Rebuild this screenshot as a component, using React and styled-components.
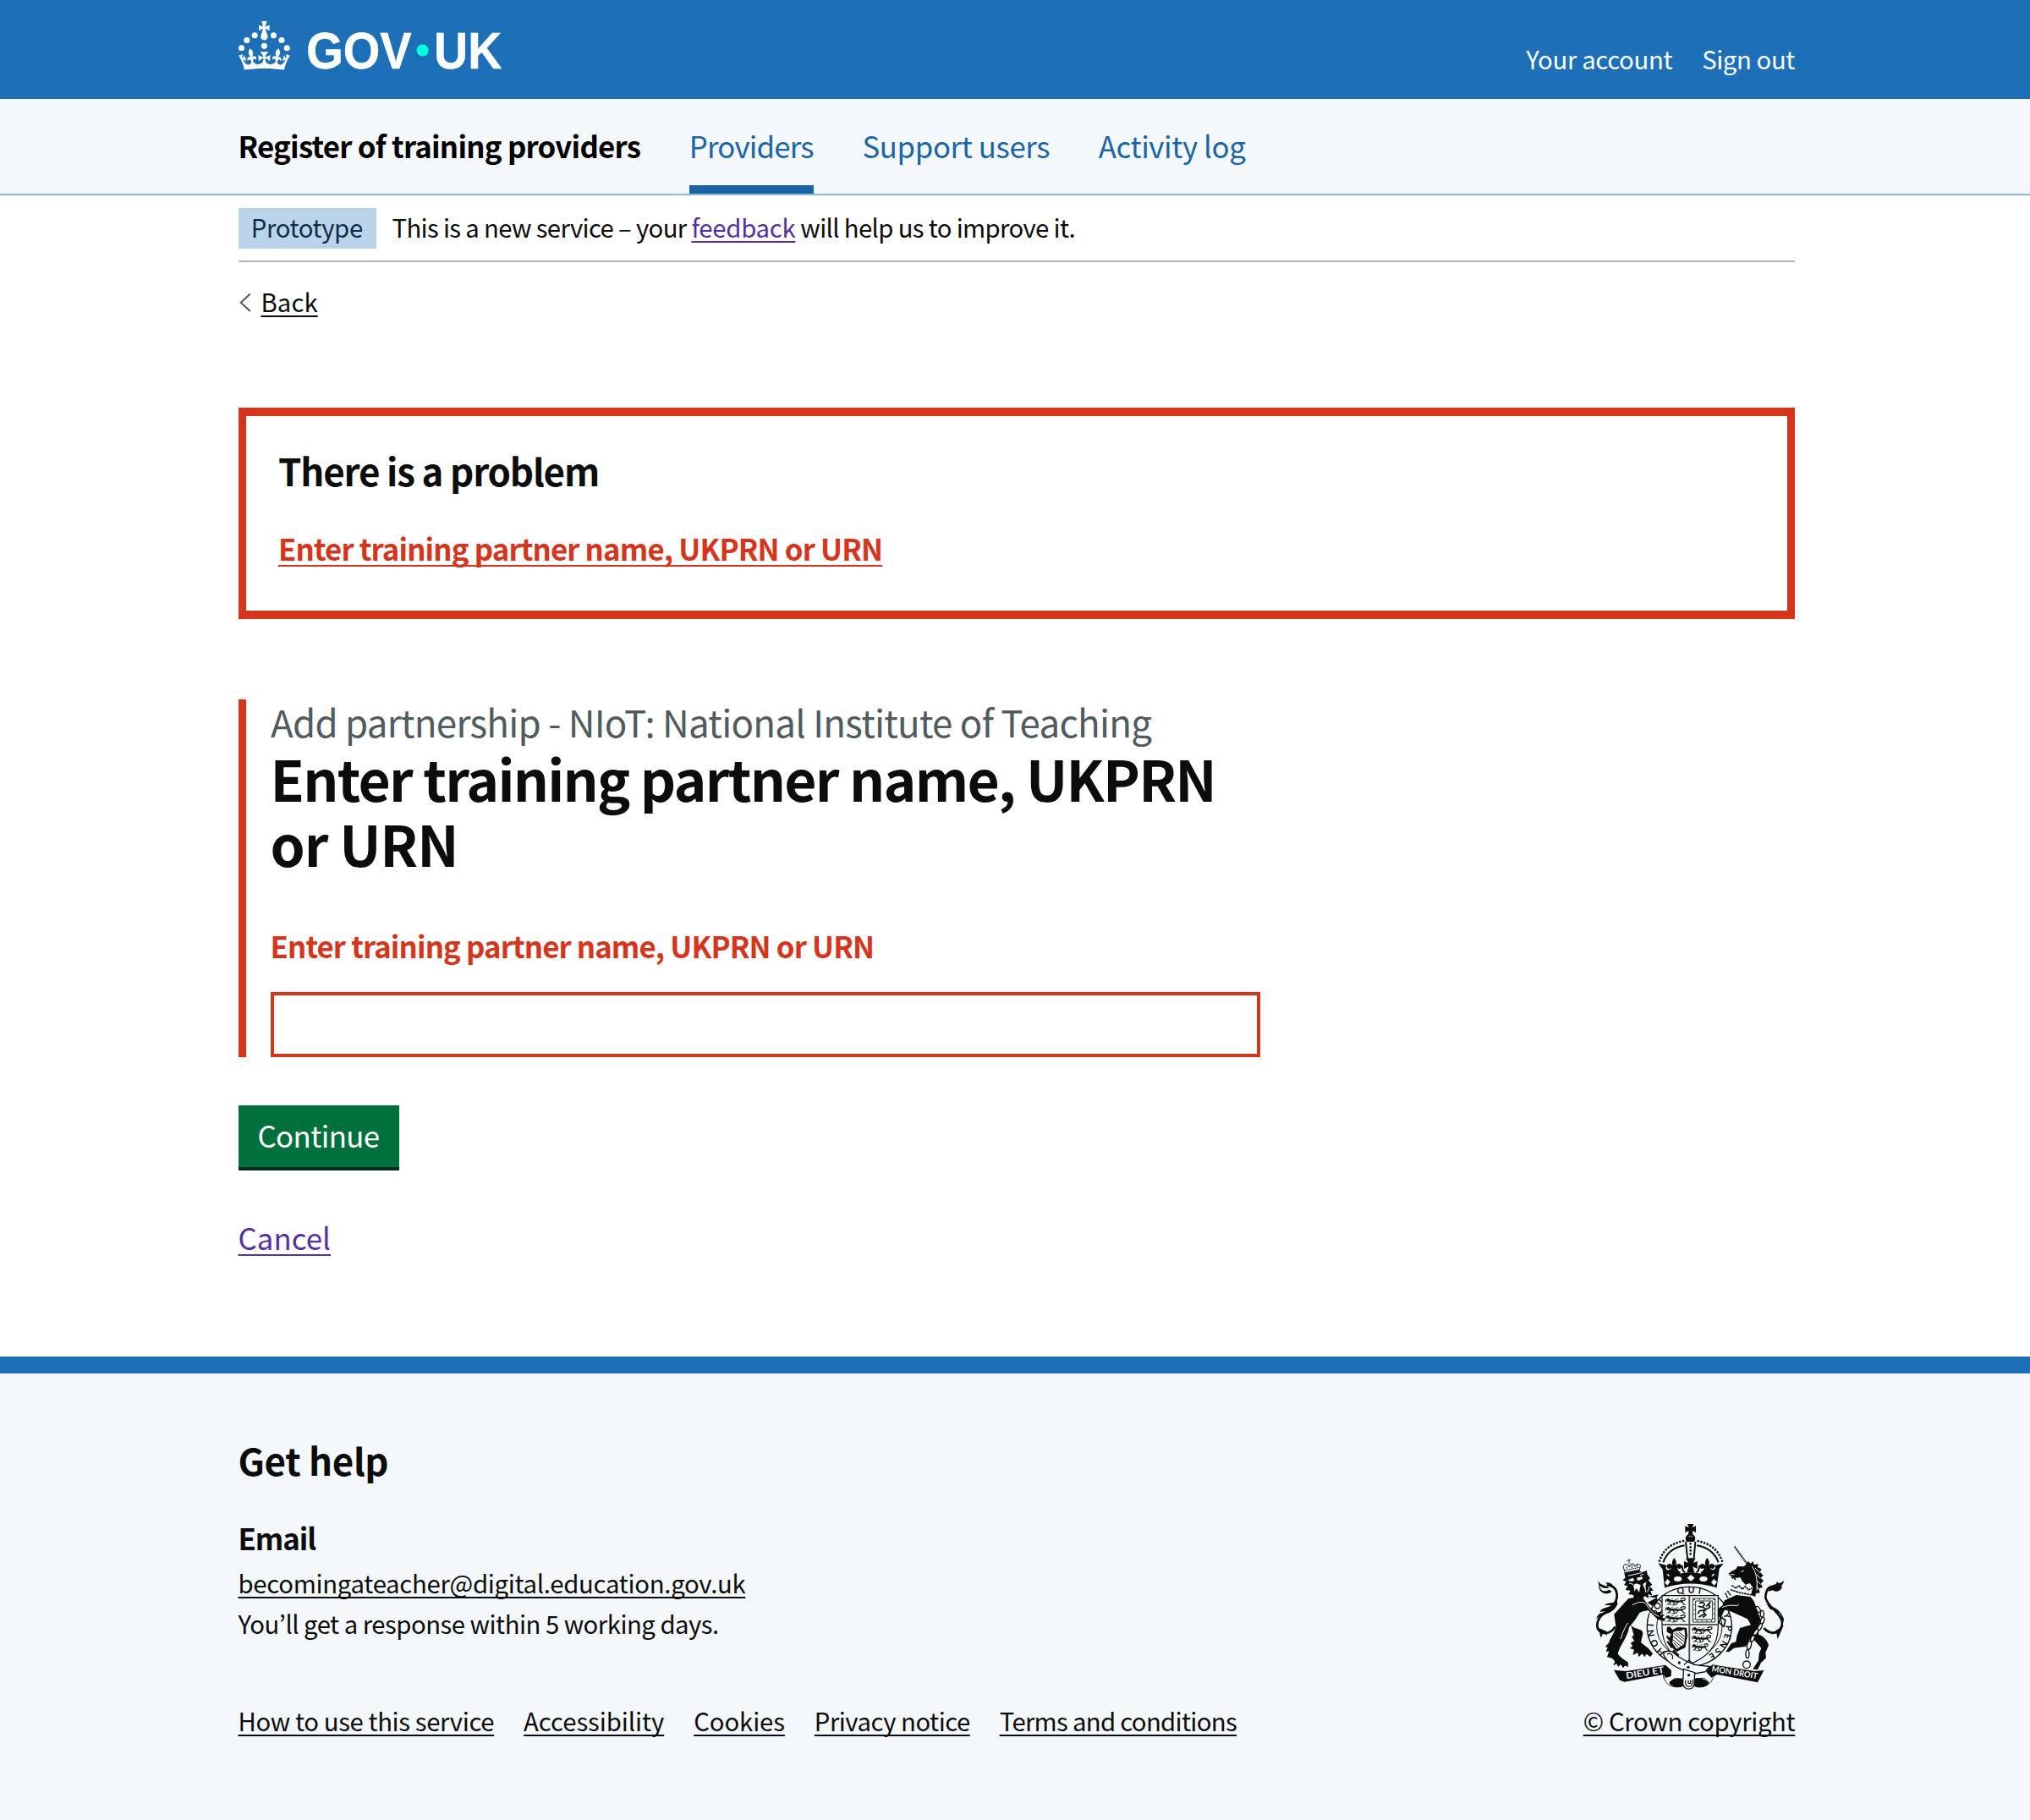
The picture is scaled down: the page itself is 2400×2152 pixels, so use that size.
import React from "react";
import styled, { createGlobalStyle } from "styled-components";

const GlobalStyle = createGlobalStyle`
  *, *::before, *::after { box-sizing: border-box; }
  body {
    margin: 0;
    background: #fff;
    color: #0b0c0c;
    font-family: "Noto Sans CJK KR", "Noto Sans", sans-serif;
    -webkit-font-smoothing: antialiased;
  }
  h1, h2, h3, p, ul { margin: 0; padding: 0; font-weight: inherit; font-size: inherit; list-style: none; }
`;

const sizes = { s: [29.3, 38], m: [34.8, 48], l: [43.9, 58], xl: [65.9, 76.7] };

const Text = styled.span`
  display: ${(p) => (p.$inline ? "inline" : "block")};
  font-size: ${(p) => sizes[p.$size || "s"][0]}px;
  line-height: ${(p) => p.$line || sizes[p.$size || "s"][1]}px;
  font-weight: ${(p) => (p.$bold ? 700 : 400)};
  letter-spacing: ${(p) => p.$track || 0}px;
  color: ${(p) => p.$color || "inherit"};
  white-space: pre;
`;

const Link = styled(Text).attrs({ as: "a", href: "#" })`
  text-decoration: ${(p) => (p.$plain ? "none" : "underline")};
  text-decoration-thickness: 2px;
  text-decoration-skip-ink: none;
  text-underline-offset: ${(p) => p.$offset || 4}px;
`;

const Container = styled.div`
  width: 1840.5px;
  margin-left: 281.5px;
`;

const Header = styled.header`
  height: 117px;
  background: #1d70b8;
  color: #fff;
`;
const HeaderRow = styled(Container)`
  display: flex;
  justify-content: space-between;
  align-items: flex-start;
`;
const Logo = styled.svg`
  display: block;
  width: 310.6px;
  height: 58px;
  margin-top: 25px;
  overflow: visible;
`;
const HeaderLinks = styled.nav`
  display: flex;
  gap: 35px;
  padding-top: 50px;
`;

const ServiceNav = styled.div`
  height: 114px;
  background: #f4f8fb;
  border-bottom: 2px solid #8eb8dc;
`;
const ServiceRow = styled(Container)`
  display: flex;
  height: 112px;
  gap: 57.7px;
`;
const ServiceItem = styled.div`
  padding-top: 31px;
  border-bottom: ${(p) => (p.$active ? "10px solid #1a65a6" : "0")};
`;

const PhaseBanner = styled.div`
  display: flex;
  align-items: flex-start;
  gap: 19px;
  height: 79px;
  padding-top: 15px;
  border-bottom: 2px solid #b0b6b6;
`;
const Tag = styled.div`
  width: 163px;
  height: 48px;
  padding-left: 15.3px;
  background: #bbd4ea;
`;
const BackRow = styled.div`
  display: flex;
  align-items: center;
  margin-top: 27px;
`;
const Chevron = styled.svg`
  width: 27px;
  height: 38px;
`;

const ErrorSummary = styled.section`
  height: 250px;
  margin-top: 107px;
  padding: 34.5px 38.5px;
  border: 9.6px solid #d4351c;
  border-width: 10px 9px;
`;
const ErrorLinkRow = styled.div`
  margin-top: 39px;
`;
const FormGroup = styled.div`
  width: 1208.5px;
  height: 423px;
  margin-top: 95px;
  padding-left: 29px;
  border-left: 9px solid #d4351c;
`;
const Caption = styled(Text)`
  line-height: 53px;
  padding-left: 0.5px;
  margin-bottom: 2px;
`;
const ErrorMessage = styled(Text)`
  margin: 59px 0 31px;
`;
const Input = styled.input`
  display: block;
  width: 1170px;
  height: 77px;
  padding: 8px;
  border: 4px solid #d4351c;
  border-radius: 0;
  outline: 0;
  font: inherit;
  font-size: 34.8px;
`;
const Button = styled.button`
  display: block;
  width: 190px;
  height: 73px;
  margin: 57px 0 59px;
  padding: 0 0 1.6px;
  border: 0;
  background: #00703c;
  box-shadow: 0 4px 0 #002d18;
  color: #fff;
  font-family: inherit;
  text-align: center;
`;
const ButtonLabel = styled(Text)`
  line-height: 71.4px;
`;

const Footer = styled.footer`
  height: 548px;
  margin-top: 117px;
  padding-top: 73px;
  border-top: 20px solid #1d70b8;
  background: #f4f8fb;
`;
const FooterRow = styled(Container)`
  display: flex;
  justify-content: space-between;
  align-items: flex-end;
`;
const EmailHeading = styled(Text)`
  margin: 38.5px 0 5.5px;
`;
const FooterLinks = styled.ul`
  display: flex;
  gap: 35px;
  margin-top: 72px;
`;
const CrestBlock = styled.div`
  width: 250.3px;
`;
const CrestSvg = styled.svg`
  display: block;
  width: 226.67px;
  height: 200px;
  margin: 0 0 15.2px 13.3px;
`;

const GovLogo = () => (
  <Logo viewBox="0 0 324 60.5" fill="#fff" preserveAspectRatio="xMinYMin meet">
    <circle cx="20" cy="17.6" r="3.7" />
    <circle cx="10.2" cy="23.5" r="3.7" />
    <circle cx="3.7" cy="33.2" r="3.7" />
    <circle cx="31.7" cy="30.6" r="3.7" />
    <circle cx="43.3" cy="17.6" r="3.7" />
    <circle cx="53.2" cy="23.5" r="3.7" />
    <circle cx="59.7" cy="33.2" r="3.7" />
    <path d="M33.1,9.8c.2-.1.3-.3.5-.5l4.6,2.4v-6.8l-4.6,1.5c-.1-.2-.3-.3-.5-.5l1.9-5.9h-6.7l1.9,5.9c-.2.1-.3.3-.5.5l-4.6-1.5v6.8l4.6-2.4c.1.2.3.3.5.5l-2.6,8c-.9,2.8,1.2,5.7,4.1,5.7h0c3,0,5.1-2.9,4.1-5.7l-2.6-8ZM37,37.9s-3.4,3.8-4.1,6.1c2.2,0,4.2-.5,6.4-2.8l-.7,8.5c-2-2.8-4.4-4.1-5.7-3.8.1,3.1.5,6.7,5.8,7.2,3.7.3,6.7-1.5,7-3.8.4-2.6-2-4.3-3.7-1.6-1.4-4.5,2.4-6.1,4.9-3.2-1.9-4.5-1.8-7.7,2.4-10.9,3,4,2.6,7.3-1.2,11.1,2.4-1.3,6.2,0,4,4.6-1.2-2.8-3.7-2.2-4.2.2-.3,1.7.7,3.7,3,4.2,1.9.3,4.7-.9,7-5.9-1.3,0-2.4.7-3.9,1.7l2.4-8c.6,2.3,1.4,3.7,2.2,4.5.6-1.6.5-2.8,0-5.3l5,1.8c-2.6,3.6-5.2,8.7-7.3,17.5-7.4-1.1-15.7-1.7-24.5-1.7h0c-8.8,0-17.1.6-24.5,1.7-2.1-8.9-4.7-13.9-7.3-17.5l5-1.8c-.5,2.5-.6,3.7,0,5.3.8-.8,1.6-2.3,2.2-4.5l2.4,8c-1.5-1-2.6-1.7-3.9-1.7,2.3,5,5.2,6.2,7,5.9,2.3-.4,3.3-2.4,3-4.2-.5-2.4-3-3.1-4.2-.2-2.2-4.6,1.6-6,4-4.6-3.7-3.7-4.2-7.1-1.2-11.1,4.2,3.2,4.3,6.4,2.4,10.9,2.5-2.8,6.3-1.3,4.9,3.2-1.8-2.7-4.1-1-3.7,1.6.3,2.3,3.3,4.1,7,3.8,5.4-.5,5.7-4.2,5.8-7.2-1.3-.2-3.7,1-5.7,3.8l-.7-8.5c2.2,2.3,4.2,2.7,6.4,2.8-.7-2.3-4.1-6.1-4.1-6.1h10.6,0Z" />
    <g fontFamily="Liberation Sans, sans-serif" fontWeight="700" fontSize="64" stroke="#fff" strokeWidth="0.5">
      <text x="83.6" y="58.1" textLength="130" lengthAdjust="spacingAndGlyphs">GOV</text>
      <text x="241" y="58.1" textLength="83.8" lengthAdjust="spacingAndGlyphs">UK</text>
    </g>
    <circle cx="227" cy="36" r="7.4" fill="#00ffe0" />
  </Logo>
);

const Fleur = ({ x, y, s = 1 }) => (
  <path
    transform={`translate(${x} ${y}) scale(${s})`}
    d="M0-26C-8-16-9-8-5 2C-10-8-24-8-25 3C-25 12-15 14-12 7C-10 14-14 20-22 22L-16 36H16L22 22C14 20 10 14 12 7C15 14 25 12 25 3C24-8 10-8 5 2C9-8 8-16 0-26Z"
  />
);

const Passant = ({ x, y, w = 1 }) => (
  <g transform={`translate(${x} ${y}) scale(${w} 1)`} fill="none" stroke="#0b0c0c" strokeLinecap="round">
    <circle cx="8" cy="7" r="5" fill="#0b0c0c" strokeWidth="2" />
    <path strokeWidth="7" d="M14 11C26 8 38 15 56 10" />
    <path strokeWidth="3.5" d="M17 13L9 22M25 14L32 23L24 25M42 14L37 23M54 12L64 22M59 10C70 9 71-1 62 0L52 3M1 4L-1 13" />
    <path strokeWidth="2" d="M18 5L24 2M32 6L42 3M7 19L3 24M62 22L69 24M14 23H20" />
  </g>
);

const Crest = () => (
  <CrestSvg viewBox="75 60 680 600" fill="#0b0c0c">
    {/* garter and its motto */}
    <ellipse cx="412" cy="430" rx="150" ry="141" fill="#f4f8fb" stroke="#0b0c0c" strokeWidth="4" />
    <g fill="none">
      <path id="garter-left" d="M327 520A124 117 0 0 1 288 408" />
      <path id="garter-upper" d="M293 390A124 117 0 0 1 345 330" />
      <path id="garter-top" d="M364 318Q412 303 464 318" />
      <path id="garter-right" d="M531 385A124 117 0 0 1 463 538" />
    </g>
    <g fontFamily="Lato, sans-serif" fontWeight="700" fontSize="32">
      <text><textPath href="#garter-left" textLength="112">HONI</textPath></text>
      <text><textPath href="#garter-upper" textLength="74">SOIT</textPath></text>
      <text><textPath href="#garter-top" textLength="82" startOffset="6">QUI</textPath></text>
      <text><textPath href="#garter-right" textLength="170">Y PENSE</textPath></text>
    </g>
    <ellipse cx="412" cy="430" rx="116" ry="110" fill="#f4f8fb" stroke="#0b0c0c" strokeWidth="3" />

    {/* shield */}
    <path d="M315 320H514V430C514 505 470 540 412 564C350 540 315 500 315 430Z" fill="#f4f8fb" stroke="#0b0c0c" strokeWidth="3.5" />
    <path d="M412 320V560M315 423H514" stroke="#0b0c0c" strokeWidth="5" />
    <path d="M412 320V560M315 423H514" stroke="#bfc3c6" strokeWidth="1.3" />
    <Passant x={329} y={329} />
    <Passant x={329} y={359} />
    <Passant x={329} y={389} />
    <Passant x={424} y={431} />
    <Passant x={423} y={461} w={0.95} />
    <Passant x={423} y={491} w={0.8} />
    <path d="M424 330H503V414H424ZM434 339H494V405H434Z" fill="none" stroke="#0b0c0c" strokeWidth="2.6" />
    <path d="M429 334H499V410H429Z" fill="none" stroke="#0b0c0c" strokeWidth="4" strokeDasharray="3 14" />
    <path d="M449 346L459 343L466 352L459 361L471 368L462 378L471 389L461 396M459 361L445 358M464 372L448 374L443 383M463 386L447 395M472 368L485 361L480 349L486 344M473 357L479 351" fill="none" stroke="#0b0c0c" strokeWidth="5" strokeLinejoin="round" strokeLinecap="round" />
    <path d="M332 432L343 430L352 441L370 432L402 434L405 463L397 505L366 519L345 498L340 472L347 457L332 449Z" />
    <path d="M355 451C366 440 376 452 394 439L397 463L393 493L367 509L352 489Z" fill="#f4f8fb" />
    <path d="M358 455L393 484M354 464L390 494M353 476L382 500M356 488L373 503M364 451L395 475M375 450L396 466" stroke="#0b0c0c" strokeWidth="3" />
    <path d="M332 464L345 480M334 482L350 505M354 514L374 533" stroke="#0b0c0c" strokeWidth="7" />

    {/* imperial crown */}
    <path d="M405 66H427L422 79L435 73V96L422 90L425 104H407L410 90L397 96V73L410 79Z" />
    <path d="M415 101C430 101 438 115 429 129H402C394 116 400 102 415 101Z" />
    <path d="M409 111Q416 106 424 112" fill="none" stroke="#f4f8fb" strokeWidth="2" />
    <path d="M397 130H435L431 188H402Z" fill="#f4f8fb" />
    <path d="M399 129L405 186M433 129L428 186" stroke="#0b0c0c" strokeWidth="6" />
    <path d="M416 136V184" stroke="#0b0c0c" strokeWidth="8" strokeLinecap="round" strokeDasharray="0.1 12" />
    <path d="M306 197Q325 138 392 126M528 197Q507 138 440 126" fill="none" stroke="#0b0c0c" strokeWidth="8" strokeLinecap="round" strokeDasharray="0.1 11.5" />
    <path d="M319 202Q337 152 395 142M515 202Q496 152 438 142" fill="none" stroke="#0b0c0c" strokeWidth="6" />
    <path d="M301 205L333 213C320 225 337 236 344 224C347 235 340 246 330 244L338 252Q416 225 495 252L503 243C491 246 484 235 488 224C496 235 511 224 500 213L533 206L518 224L509 292Q416 263 324 292L317 227Z" />
    <Fleur x={358} y={213} s={1.05} />
    <Fleur x={475} y={213} s={1.05} />
    <path d="M399 187H434L425 204L440 198V225L424 217L430 239H403L409 217L393 225V198L408 204Z" />
    <path d="M386 213Q386 231 396 238M447 213Q447 231 437 238" fill="none" stroke="#0b0c0c" strokeWidth="6" />
    <ellipse cx="371" cy="261" rx="14" ry="9" fill="#f4f8fb" />
    <ellipse cx="462" cy="261" rx="14" ry="9" fill="#f4f8fb" />
    <path d="M417 246L431 257L417 269L404 257ZM334 261L344 271L334 284L324 274ZM499 261L510 272L500 284L489 273Z" fill="#f4f8fb" />

    {/* lion: tail, body, head */}
    <path d="M149 430C130 462 84 460 85 424C86 378 153 372 155 322C156 297 140 281 119 284" fill="none" stroke="#0b0c0c" strokeWidth="8" />
    <path d="M88 264C92 284 111 281 128 292C116 296 103 293 94 285C96 304 111 309 127 299L137 305C120 321 96 311 92 294ZM155 335C145 351 124 341 111 354L135 354C124 364 104 360 94 377L120 376C105 382 86 380 82 403C99 384 141 389 157 350ZM89 434L98 470L106 452L120 461L117 446ZM113 275Q128 280 136 291L140 282Q130 270 113 275Z" />
    <path d="M195 331L145 386L151 430C148 452 127 477 128 485L113 502L122 503L116 519L127 517L120 538L138 542L148 554L142 568L154 562L160 573L168 564L177 577L184 568L194 574L195 557L173 542L158 527C162 503 195 463 198 432L218 408L236 380L266 372L285 390L300 405L325 411L324 399L313 400L325 386L309 390L315 376L293 380L271 361L242 322Z" />
    <path d="M204 424C217 443 248 434 247 455L240 486L267 508L282 526L274 537L259 527L254 538L244 526L232 538L229 523L211 530L216 512L201 507L211 498L203 489L216 480L208 466L215 460Z" />
    <path d="M263 345L296 327L301 340L281 357ZM266 324L302 316L295 328Z" />
    <path d="M181 241L234 230L243 238L261 231L263 245L273 259L266 265L280 281L272 287L285 302L274 303L280 320L266 314L267 329L252 321L247 334L232 323L216 332L213 318L196 315L203 302L185 300L193 286L180 283L188 271L175 264L185 257Z" />
    <path d="M193 265L212 257L217 266L206 270ZM225 257L243 252L247 260L229 268ZM213 283L223 277L239 282L234 308L223 294L218 306ZM191 250L211 244M247 279L260 271L253 298Z" fill="#f4f8fb" />
    <path d="M194 250L241 239M198 276L213 280M255 286L257 309M271 288L263 307M237 248L250 244" stroke="#f4f8fb" strokeWidth="3" />
    <path d="M184 240L178 220C176 205 194 207 199 218C202 204 215 203 219 217C226 202 243 208 237 221L235 230Z" fill="#f4f8fb" stroke="#0b0c0c" strokeWidth="3" />
    <path d="M184 230L235 220M186 238L235 228M191 224V216M208 222V209M226 218V208M198 191V208M190 196L205 194" stroke="#0b0c0c" strokeWidth="3" strokeDasharray="5 2" />
    <path d="M210 354C226 344 246 337 259 351C270 369 286 388 304 394M194 417C178 440 174 459 168 474M240 382C252 372 262 376 275 384" fill="none" stroke="#f4f8fb" strokeWidth="3" />

    {/* unicorn: tail, body, head */}
    <path d="M676 435C704 466 742 449 741 414C735 378 691 364 682 327C683 295 697 281 723 290" fill="none" stroke="#0b0c0c" strokeWidth="8" />
    <path d="M747 266C736 281 716 273 700 289L690 305L709 301C722 312 741 301 741 286L725 291C737 288 746 281 747 266ZM681 344C696 363 727 353 747 402L746 414L731 382L724 386L715 371L700 370ZM746 426L725 474L721 454L702 458L723 441ZM723 271L715 284L730 276Z" />
    <path d="M537 337L578 318L628 324C650 343 645 367 660 389C670 412 655 438 647 467L625 476L612 500L570 506L553 520L541 519L561 489L577 484L581 461L591 435L630 424L618 403L570 381L546 371C526 370 536 389 524 411L513 386L514 367L529 355Z" />
    <path d="M662 399L657 458C671 460 691 480 693 497L682 522L684 541L666 558L654 583L637 581L657 550L659 526L667 506L633 468Z" />
    <path d="M528 362Q550 351 581 356L588 350M538 372L524 400L534 425" fill="none" stroke="#f4f8fb" strokeWidth="3" />
    <path d="M522 396L540 407L534 430L518 416Z" fill="none" stroke="#0b0c0c" strokeWidth="5" />
    <path d="M572 146L616 207" stroke="#0b0c0c" strokeWidth="6" strokeDasharray="5 2" />
    <path d="M605 217L616 207L618 197L630 206L637 198L641 210L656 208L654 220L668 226L662 236L674 248L665 257L675 268L666 276L671 291L660 294L661 311L648 311L646 324L630 318L633 296L620 287L603 290L599 269L593 256L568 258L550 243L560 235L577 226L583 216Z" />
    <path d="M595 235L605 232M557 244L572 246M634 216Q656 244 651 302M645 222L662 239M650 244L664 260M652 267L665 281M651 286L661 301" fill="none" stroke="#f4f8fb" strokeWidth="3" />
    <path d="M560 253L580 269L577 280L590 285L601 270L611 281L626 276L637 291L629 321L604 310L587 315L559 308L545 328L535 311L555 303L562 287L573 279Z" fill="#f4f8fb" />
    <path d="M561 255L579 264M562 284L577 293L588 285L600 298L610 287L622 300L634 293M558 299L588 309L631 317M539 311L549 330M547 303L559 320" fill="none" stroke="#0b0c0c" strokeWidth="5" strokeDasharray="8 2" />
    <g fill="#f4f8fb" stroke="#0b0c0c" strokeWidth="4">
      <ellipse cx="656" cy="369" rx="6" ry="12" transform="rotate(-30 656 369)" />
      <ellipse cx="670" cy="385" rx="6" ry="12" />
      <ellipse cx="671" cy="408" rx="6" ry="12" transform="rotate(15 671 408)" />
      <ellipse cx="662" cy="431" rx="6" ry="13" transform="rotate(28 662 431)" />
      <ellipse cx="648" cy="450" rx="6" ry="12" transform="rotate(35 648 450)" />
      <ellipse cx="636" cy="472" rx="6" ry="12" transform="rotate(20 636 472)" />
      <ellipse cx="624" cy="496" rx="7" ry="15" transform="rotate(12 624 496)" />
      <ellipse cx="618" cy="527" rx="6" ry="15" />
      <circle cx="615" cy="565" r="13" fill="none" />
    </g>

    {/* motto scroll and garter buckle */}
    <path d="M144 584L188 588L327 566L348 585L347 606L320 614L319 600L182 626L165 620Z" />
    <path d="M481 575L494 565L644 588L676 585L654 628L511 600L490 611L472 591Z" />
    <path d="M320 600C324 647 370 652 393 636L392 615L360 614L340 629M499 602C490 643 455 650 427 637L433 614L465 613L482 629" fill="#f4f8fb" stroke="#0b0c0c" strokeWidth="2.5" />
    <path d="M342 628C353 612 373 613 391 617L393 639C376 650 356 646 342 634ZM430 616C450 609 471 618 481 629C472 646 446 650 429 641Z" />
    <path d="M326 519C350 511 359 526 374 537C402 555 423 565 449 568L483 571L469 590L430 597C393 584 357 577 332 548C318 531 318 524 326 519Z" fill="#f4f8fb" stroke="#0b0c0c" strokeWidth="4" />
    <path d="M391 581L431 593L429 635C423 658 395 656 389 634Z" fill="#f4f8fb" stroke="#0b0c0c" strokeWidth="4" />
    <path d="M398 620V632C402 647 420 646 423 630V618M408 620V631H416V620M393 566L410 549L431 567M333 529C343 520 358 532 351 546" fill="none" stroke="#0b0c0c" strokeWidth="3.5" />
    <circle cx="376" cy="558" r="5" />
    <circle cx="408" cy="574" r="5" />
    <circle cx="410" cy="602" r="5" />
    <g fontFamily="Lato, sans-serif" fontWeight="700" fill="#f4f8fb">
      <text transform="translate(189 616) rotate(-9.5)" fontSize="32" textLength="136" lengthAdjust="spacingAndGlyphs">DIEU ET</text>
      <text transform="translate(490 589) rotate(9.5)" fontSize="30" textLength="164" lengthAdjust="spacingAndGlyphs">MON DROIT</text>
    </g>
  </CrestSvg>
);

export default function App() {
  return (
    <>
      <GlobalStyle />
      <Header>
        <HeaderRow>
          <GovLogo />
          <HeaderLinks>
            <Link $plain $color="#fff" $track={-0.35}>Your account</Link>
            <Link $plain $color="#fff" $track={-0.4}>Sign out</Link>
          </HeaderLinks>
        </HeaderRow>
      </Header>

      <ServiceNav>
        <ServiceRow>
          <ServiceItem><Text $size="m" $bold $color="#000" $track={-0.76}>Register of training providers</Text></ServiceItem>
          <ServiceItem $active><Link $plain $size="m" $color="#1a65a6" $track={-0.81}>Providers</Link></ServiceItem>
          <ServiceItem><Link $plain $size="m" $color="#1a65a6" $track={-0.4}>Support users</Link></ServiceItem>
          <ServiceItem><Link $plain $size="m" $color="#1a65a6" $track={-0.42}>Activity log</Link></ServiceItem>
        </ServiceRow>
      </ServiceNav>

      <Container>
        <PhaseBanner>
          <Tag><Text $line={44} $color="#0c2d4a" $track={-0.37}>Prototype</Text></Tag>
          <Text as="p" $line={44} $track={-0.65}>
            {"This is a new service – your "}
            <Link $inline $line={44} $color="#54319f" $track={-0.26}>feedback</Link>
            {" will help us to improve it."}
          </Text>
        </PhaseBanner>

        <BackRow>
          <Chevron viewBox="0 0 27 38" fill="none" stroke="#505a5f" strokeWidth="2">
            <path d="M13.8 10.5L2.8 20.8L13.8 31" />
          </Chevron>
          <Link $track={0.1}>Back</Link>
        </BackRow>

        <ErrorSummary>
          <Text as="h2" $size="l" $bold $track={-1.18}>There is a problem</Text>
          <ErrorLinkRow>
            <Link $inline $size="m" $bold $offset={5} $color="#d4351c" $track={-0.87}>Enter training partner name, UKPRN or URN</Link>
          </ErrorLinkRow>
        </ErrorSummary>

        <FormGroup>
          <Caption $size="l" $color="#505a5f" $track={-0.74}>Add partnership - NIoT: National Institute of Teaching</Caption>
          <Text as="h1" $size="xl" $bold $track={-1.74}>
            {"Enter training partner name, UKPRN\n"}
            <Text $inline $size="xl" $bold $track={-1.1}>or URN</Text>
          </Text>
          <ErrorMessage as="p" $size="m" $bold $color="#d4351c" $track={-0.885}>Enter training partner name, UKPRN or URN</ErrorMessage>
          <Input aria-label="Enter training partner name, UKPRN or URN" />
        </FormGroup>

        <Button><ButtonLabel $size="m" $track={-0.6}>Continue</ButtonLabel></Button>
        <Text as="p" $size="m"><Link $inline $size="m" $offset={5} $track={0.08} $color="#54319f">Cancel</Link></Text>
      </Container>

      <Footer>
        <FooterRow>
          <div>
            <Text as="h2" $size="l" $bold $track={-0.35}>Get help</Text>
            <EmailHeading as="h3" $size="m" $bold $track={-1.1}>Email</EmailHeading>
            <Text as="p" $line={48}><Link $inline $line={48} $track={-0.29}>becomingateacher@digital.education.gov.uk</Link></Text>
            <Text as="p" $line={48} $track={-0.5}>You’ll get a response within 5 working days.</Text>
            <FooterLinks>
              <li><Link $track={-0.38}>How to use this service</Link></li>
              <li><Link $track={-0.06}>Accessibility</Link></li>
              <li><Link $track={-0.1}>Cookies</Link></li>
              <li><Link $track={-0.49}>Privacy notice</Link></li>
              <li><Link $track={-0.69}>Terms and conditions</Link></li>
            </FooterLinks>
          </div>
          <CrestBlock>
            <Crest />
            <Link $track={-0.34}>© Crown copyright</Link>
          </CrestBlock>
        </FooterRow>
      </Footer>
    </>
  );
}
